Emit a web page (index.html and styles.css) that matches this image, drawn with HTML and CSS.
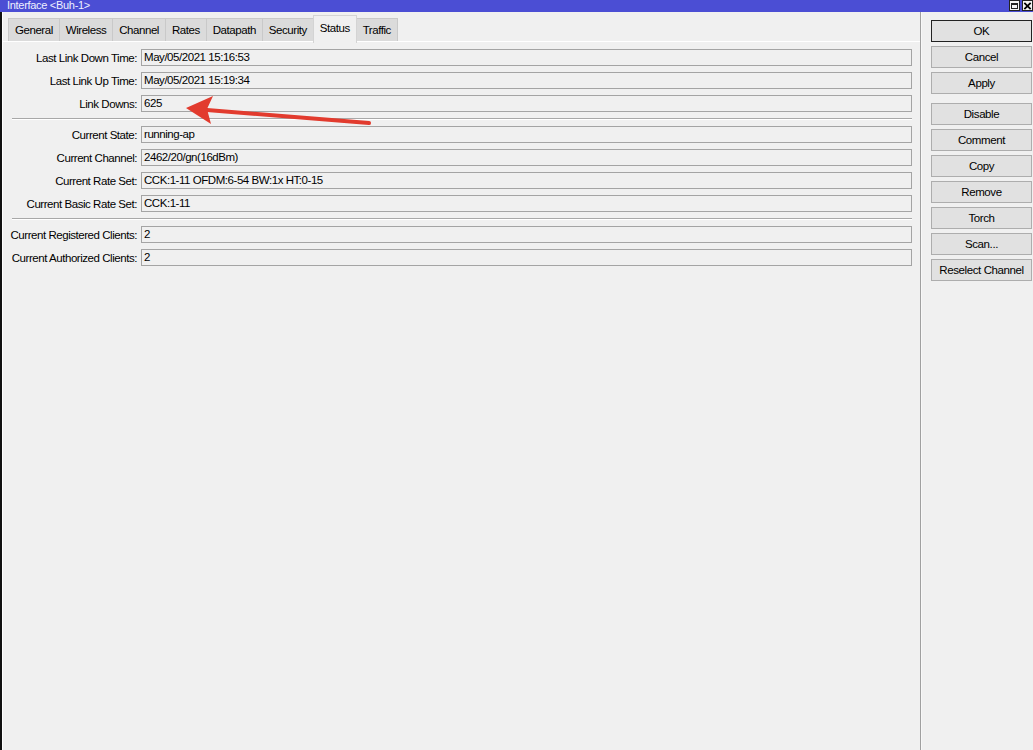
FILE: index.html
```html
<!DOCTYPE html>
<html lang="en">
<head>
  <meta charset="UTF-8">
  <title>Interface &lt;Buh-1&gt;</title>
  <link rel="stylesheet" href="styles.css">
</head>
<body>

  <!-- Window caption -->
  <div class="titlebar">
    <span class="title">Interface &lt;Buh-1&gt;</span>
    <div class="caption-buttons">
      <span class="cap-btn cap-max"><span class="max-box"></span></span>
      <span class="cap-btn cap-close">
        <svg width="10" height="10" viewBox="0 0 10 10"><path d="M1.5 1.5 L8.5 8.5 M8.5 1.5 L1.5 8.5" stroke="#000" stroke-width="2"/></svg>
      </span>
    </div>
  </div>

  <div class="window">
    <section class="main">
      <!-- Tabs -->
      <div class="tabs">
        <span class="tab">General</span>
        <span class="tab">Wireless</span>
        <span class="tab">Channel</span>
        <span class="tab">Rates</span>
        <span class="tab">Datapath</span>
        <span class="tab">Security</span>
        <span class="tab active">Status</span>
        <span class="tab">Traffic</span>
      </div>

      <!-- Status fields -->
      <div class="panel">
        <div class="row"><label>Last Link Down Time:</label><div class="field">May/05/2021 15:16:53</div></div>
        <div class="row"><label>Last Link Up Time:</label><div class="field">May/05/2021 15:19:34</div></div>
        <div class="row"><label>Link Downs:</label><div class="field">625</div></div>
        <div class="sep"></div>
        <div class="row"><label>Current State:</label><div class="field">running-ap</div></div>
        <div class="row"><label>Current Channel:</label><div class="field">2462/20/gn(16dBm)</div></div>
        <div class="row"><label>Current Rate Set:</label><div class="field">CCK:1-11 OFDM:6-54 BW:1x HT:0-15</div></div>
        <div class="row"><label>Current Basic Rate Set:</label><div class="field">CCK:1-11</div></div>
        <div class="sep"></div>
        <div class="row"><label>Current Registered Clients:</label><div class="field">2</div></div>
        <div class="row"><label>Current Authorized Clients:</label><div class="field">2</div></div>
      </div>
    </section>

    <!-- Action buttons -->
    <aside class="sidebar">
      <div class="btn-group">
        <button class="btn default">OK</button>
        <button class="btn">Cancel</button>
        <button class="btn">Apply</button>
      </div>
      <div class="btn-group">
        <button class="btn">Disable</button>
        <button class="btn">Comment</button>
        <button class="btn">Copy</button>
        <button class="btn">Remove</button>
        <button class="btn">Torch</button>
        <button class="btn">Scan...</button>
        <button class="btn">Reselect Channel</button>
      </div>
    </aside>
  </div>

  <!-- Red annotation arrow pointing at Link Downs -->
  <svg class="arrow" width="200" height="40" viewBox="0 0 200 40">
    <line x1="26" y1="18" x2="188" y2="31" stroke="#e23b2e" stroke-width="4" stroke-linecap="round"/>
    <polygon points="5,16 32,4 26,17 30,32" fill="#e23b2e"/>
  </svg>

</body>
</html>
```

FILE: styles.css
```css
body {
  margin: 0;
  padding: 0;
  background-color: #f0f0f0;
  font-family: 'Liberation Sans', Arial, sans-serif;
  font-size: 11.5px;
  letter-spacing: -0.45px;
  color: #000;
  width: 1033px;
  height: 750px;
  overflow: hidden;
  position: relative;
}

.titlebar {
  height: 12px;
  background-color: #4b4ed4;
  display: flex;
  justify-content: space-between;
  align-items: flex-start;
}

.title {
  color: #eef0ff;
  font-size: 11px;
  letter-spacing: -0.3px;
  line-height: 11px;
  padding-left: 7px;
}

.caption-buttons {
  display: flex;
  gap: 2px;
}

.cap-btn {
  width: 11px;
  height: 11px;
  background-color: #f4f4f4;
  border: 1px solid #222;
  box-sizing: border-box;
  display: flex;
  align-items: center;
  justify-content: center;
}

.max-box {
  width: 7px;
  height: 6px;
  border: 1px solid #222;
  border-top-width: 2px;
  box-sizing: border-box;
}

.window {
  display: flex;
  height: 738px;
  border-left: 2px solid #111;
}

.main {
  width: 917px;
  border-left: 1px solid #fff;
}

.tabs {
  display: flex;
  padding: 6px 0 0 5px;
  height: 30px;
  box-sizing: border-box;
  border-bottom: 1px solid #fff;
}

.tab {
  background-color: #dbdbdb;
  border: 1px solid #c9c9c9;
  border-bottom: none;
  padding: 0 6px;
  line-height: 22px;
  margin-right: -1px;
}

.tab.active {
  background-color: #f0f0f0;
  border-color: #d4d4d4;
  margin-top: -3px;
  line-height: 24px;
  margin-bottom: -2px;
  position: relative;
}

.panel {
  display: flex;
  flex-direction: column;
  gap: 6px;
  padding: 7px 8px 0 5px;
}

.row {
  display: grid;
  grid-template-columns: 129px 1fr;
  gap: 4px;
  align-items: center;
}

.row label {
  text-align: right;
  white-space: nowrap;
}

.field {
  height: 17px;
  box-sizing: border-box;
  border: 1px solid #a4a4a4;
  background-color: #f0f0f0;
  padding: 0 2px;
  line-height: 15px;
  white-space: nowrap;
}

.sep {
  height: 1px;
  border-top: 1px solid #a8a8a8;
  background-color: #fff;
  margin-left: 4px;
}

.sidebar {
  width: 101px;
  border-left: 1px solid #a0a0a0;
  box-shadow: inset 1px 0 0 #f8f8f8;
  padding: 8px 1px 0 10px;
  display: flex;
  flex-direction: column;
  gap: 9px;
}

.btn-group {
  display: flex;
  flex-direction: column;
  gap: 4px;
}

.btn {
  height: 22px;
  width: 101px;
  padding: 0;
  background-color: #e1e1e1;
  border: 1px solid #adadad;
  font-family: inherit;
  font-size: 11.5px;
  letter-spacing: -0.4px;
  color: #000;
}

.btn.default {
  border-color: #222;
}

.arrow {
  position: absolute;
  left: 181px;
  top: 92px;
}
```
